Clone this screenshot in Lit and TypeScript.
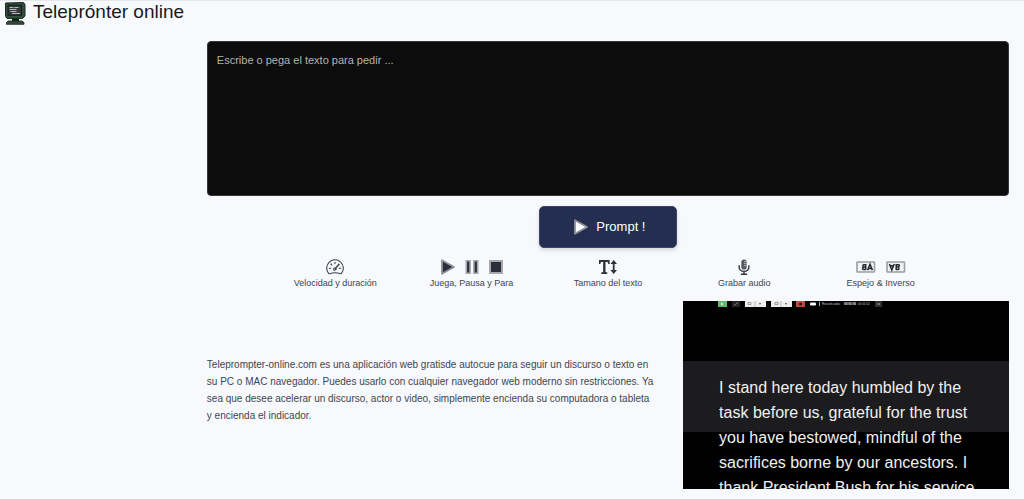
import { LitElement, html, css, svg } from "lit";
import { customElement, state } from "lit/decorators.js";

const playIcon = html`<svg width="14" height="16" viewBox="0 0 14 16" aria-hidden="true">
  <path d="M1 1.2v13.6L13 8z" fill="currentColor" stroke="#8e929b" stroke-width="1.8" stroke-linejoin="round" />
</svg>`;

const pauseIcon = html`<svg width="14" height="14" viewBox="0 0 14 14" aria-hidden="true">
  <g fill="#2b2f3c" stroke="#a6a8ae" stroke-width="1.6">
    <rect x="1.3" y=".8" width="3.8" height="12.4" />
    <rect x="8.9" y=".8" width="3.8" height="12.4" />
  </g>
</svg>`;

const stopIcon = html`<svg width="14" height="14" viewBox="0 0 14 14" aria-hidden="true">
  <rect x="1" y="1" width="12" height="12" fill="#2b2f3c" stroke="#a6a8ae" stroke-width="2" />
</svg>`;

const gaugeIcon = html`<svg width="18" height="16" viewBox="0 0 18 16" aria-hidden="true">
  <g fill="none" stroke="#3f434c" stroke-linecap="round" stroke-linejoin="round">
    <path d="M2.6 14.4A8.3 8.3 0 1 1 15.4 14.4Q14.8 15 14 14.6Q9 12.9 4 14.6Q3.2 15 2.6 14.4Z" stroke-width="1.1" />
    <path d="M9 3.2v1.4M4.9 5l.9.9M3.3 9.2h1.4M13.3 9.2h1.4" stroke-width="1.1" />
    <path d="M9 9.9L13 5.2" stroke-width="1.5" />
    <circle cx="8.7" cy="10.2" r="1.3" stroke-width="1" />
  </g>
</svg>`;

const sizeIcon = html`<svg width="18" height="14" viewBox="0 0 18 14" aria-hidden="true">
  <path d="M0 0h10.600v4H9.200L8.700 1.900H6.500v10.200l1.800.4V14H2.300v-1.500l1.800-.4V1.900H1.900L1.400 4H0z" fill="#2f333b" />
  <path d="M14.700 0L18 4h-2.400v6H18l-3.300 4-3.300-4h2.400V4h-2.400z" fill="#2f333b" />
</svg>`;

const micIcon = html`<svg width="12" height="16" viewBox="0 0 12 16" aria-hidden="true">
  <rect x="3.3" y=".4" width="5.4" height="10.2" rx="2.7" fill="#555961" />
  <path d="M6 2.6h2.700M6 4.600h2.700M6 6.600h2.700" stroke="#c3c5ca" stroke-width=".8" />
  <path d="M1.100 6.200v1.900a4.900 4.300 0 0 0 9.800 0V6.200M6 12.400V15M2.900 15.200h6.200" fill="none" stroke="#2f333b" stroke-width="1.4" />
</svg>`;

const flipFrame = svg`<rect x="1" y="1" width="17.5" height="10" rx=".6" fill="#f1f2f5" stroke="#9b9da3" stroke-width="1.6" />`;

const mirrorIcon = html`<svg width="20" height="12" viewBox="0 0 20 12" aria-hidden="true">
  ${flipFrame}
  <g fill="none" stroke="#24272e" stroke-width="1.5">
    <path d="M10 3.700H7.800Q6.900 3.700 6.900 4.800T7.800 6.100H10M7.800 6.100Q6.600 6.100 6.600 7.300T7.800 8.400H10M9.700 3v6.100" />
    <path d="M11.600 9.100L14 3.200L16.400 9.100M12.500 7.400h3" />
  </g>
</svg>`;

const invertIcon = html`<svg width="20" height="12" viewBox="0 0 20 12" aria-hidden="true">
  ${flipFrame}
  <g fill="none" stroke="#24272e" stroke-width="1.5">
    <path d="M3.400 3L5.800 8.900L8.200 3M4.300 4.700h3" />
    <path d="M10 8.400H12Q13 8.400 13 7.300T12 6H10M12 6Q13.300 6 13.300 4.800T12 3.700H10M10.200 3v6.100" />
  </g>
</svg>`;

const logo = html`<svg width="22" height="24" viewBox="0 0 22 24" aria-hidden="true">
  <path d="M1.500 2L19.500 1.500L21 3.500V15L18.500 17.500H3L1.500 15z" fill="#2c5039" stroke="#1d2b23" />
  <path d="M4 4.200h13.500v10H4z" fill="#34373b" stroke="#17191b" stroke-width="1" />
  <path d="M5.500 6.500h4M10.500 6.500h4M5.500 8.500h7M6.500 10.500h6M8 12.500h8" stroke="#b9bcbd" stroke-width="1.1" />
  <path d="M8 17.500h7v2.500H8z" fill="#182019" />
  <path d="M4 20h14l2 1.500v1.800H2.500v-1.800z" fill="#2c4f39" stroke="#18201b" stroke-width=".8" />
</svg>`;

const features = [
  { label: "Velocidad y duración", icons: [gaugeIcon] },
  { label: "Juega, Pausa y Para", icons: [playIcon, pauseIcon, stopIcon] },
  { label: "Tamano del texto", icons: [sizeIcon] },
  { label: "Grabar audio", icons: [micIcon] },
  { label: "Espejo & Inverso", icons: [mirrorIcon, invertIcon] },
];

const speech = [
  "I stand here today humbled by the",
  "task before us, grateful for the trust",
  "you have bestowed, mindful of the",
  "sacrifices borne by our ancestors. I",
  "thank President Bush for his service",
];

@customElement("prompter-preview")
class PrompterPreview extends LitElement {
  static styles = css`
    :host {
      display: block;
      height: 188px;
      overflow: hidden;
      color: #f0f0f0;
      background: linear-gradient(#000 60px, #1c1c1e 60px, #1c1c1e 131px, #000 131px);
    }
    .bar {
      display: flex;
      align-items: center;
      height: 6px;
      margin-left: 35px;
    }
    .tiny {
      font-size: 3px;
      fill: #c4c4c4;
    }
    .time {
      font-weight: 700;
      fill: #fff;
    }
    .speech {
      margin: 68px 0 0 36px;
      font-size: 16px;
      line-height: 25px;
      white-space: nowrap;
    }
    .line {
      display: block;
    }
  `;

  render() {
    return html`
      <div class="bar">
        <svg width="164" height="6" viewBox="0 0 164 6">
          <rect width="9" height="6" fill="#62b86c" />
          <path d="M3 1.500v3L6 3z" fill="#d5f0d8" />
          <rect x="14" width="8" height="6" fill="#252525" />
          <path d="M16 4.500L20 1.500" stroke="#777" />
          <rect x="27" width="21" height="6" fill="#eee" />
          <rect x="53" width="21" height="6" fill="#eee" />
          <path d="M37 0v6M63 0v6" stroke="#bbb" />
          <path d="M30 1.500h3v2h-3zM57 1.500h3v2h-3z" fill="none" stroke="#888" stroke-width=".8" />
          <path d="M41 2h2l-1 2zM67 2h2l-1 2z" fill="#555" />
          <rect x="78" width="9" height="6" fill="#c1483f" />
          <circle cx="82.500" cy="3" r="1.500" fill="#241010" />
          <rect x="92" y="1.500" width="6" height="3" rx="1" fill="#fff" />
          <path d="M101.500 1v4" stroke="#aaa" />
          <text class="tiny" x="104" y="4">Record audio</text>
          <text class="tiny time" x="126" y="4">00:00:00</text>
          <text class="tiny" x="140" y="4">00:01:02</text>
          <rect x="157" width="7" height="6" fill="#303030" />
          <path d="M159 3h3" stroke="#aaa" />
        </svg>
      </div>
      <div class="speech">${speech.map((line) => html`<span class="line">${line}</span>`)}</div>
    `;
  }
}

@customElement("app-root")
class AppRoot extends LitElement {
  static styles = css`
    :host {
      display: block;
      min-height: 100vh;
      box-sizing: border-box;
      border-top: 1px solid #e6e8ee;
      background: #f7f9fd;
      color: #40454f;
      font-family: "Liberation Sans", Arial, sans-serif;
    }
    .header {
      display: flex;
      align-items: center;
      gap: 7px;
      height: 24px;
      padding-left: 4px;
    }
    .title {
      margin: 0;
      padding-bottom: 2px;
      color: #17191d;
      font-size: 19px;
      font-weight: 400;
      line-height: 22px;
    }
    .main {
      margin: 16px 15px 0 20.2%;
    }
    .script {
      display: block;
      box-sizing: border-box;
      width: 100%;
      height: 155px;
      padding: 10px 9px;
      border: 1px solid #35373a;
      border-radius: 4px;
      background: #0c0c0c;
      color: #eee;
      font: 11px/16px "Liberation Sans", Arial, sans-serif;
      resize: none;
    }
    .script::placeholder {
      color: #b4b4b4;
      opacity: 1;
    }
    .prompt {
      display: flex;
      align-items: center;
      justify-content: center;
      gap: 8px;
      width: 138px;
      height: 42px;
      margin: 10px auto 0;
      padding: 0 0 0 4px;
      border: 1px solid #39456a;
      border-radius: 5px;
      background: #242e50;
      box-shadow: 0 2px 4px #00000026;
      color: #fff;
      font: 13px/20px "Liberation Sans", Arial, sans-serif;
      cursor: pointer;
    }
    .features {
      display: grid;
      grid-template-columns: repeat(5, 1fr);
      width: 85%;
      margin: 10px auto 0;
      padding: 0;
      list-style: none;
    }
    .feature {
      display: flex;
      flex-direction: column;
      align-items: center;
      font-size: 9px;
      line-height: 14px;
      white-space: nowrap;
    }
    .icons {
      display: flex;
      align-items: center;
      gap: 10px;
      height: 18px;
      color: #2b2f3c;
    }
    .about {
      display: grid;
      grid-template-columns: 7fr 5fr;
      gap: 20px;
      align-items: center;
      margin-top: 11px;
    }
    .intro {
      margin: 0;
      padding-bottom: 10px;
      font-size: 10px;
      line-height: 17px;
    }
  `;

  @state() private text = "";

  private onInput(e: Event) {
    this.text = (e.target as HTMLTextAreaElement).value;
  }

  render() {
    return html`
      <header class="header">
        ${logo}
        <h1 class="title">Teleprónter online</h1>
      </header>
      <main class="main">
        <textarea
          class="script"
          aria-label="Escribe o pega el texto para pedir ..."
          placeholder="Escribe o pega el texto para pedir ..."
          .value=${this.text}
          @input=${this.onInput}
        ></textarea>
        <button class="prompt" type="button">${playIcon}<span>Prompt !</span></button>
        <ul class="features">
          ${features.map(
            (f) => html`<li class="feature"><span class="icons">${f.icons}</span><span>${f.label}</span></li>`
          )}
        </ul>
        <section class="about">
          <p class="intro">
            Teleprompter-online.com es una aplicación web gratisde autocue para seguir un discurso o texto en<br />
            su PC o MAC navegador. Puedes usarlo con cualquier navegador web moderno sin restricciones. Ya<br />
            sea que desee acelerar un discurso, actor o video, simplemente encienda su computadora o tableta<br />
            y encienda el indicador.
          </p>
          <prompter-preview></prompter-preview>
        </section>
      </main>
    `;
  }
}
